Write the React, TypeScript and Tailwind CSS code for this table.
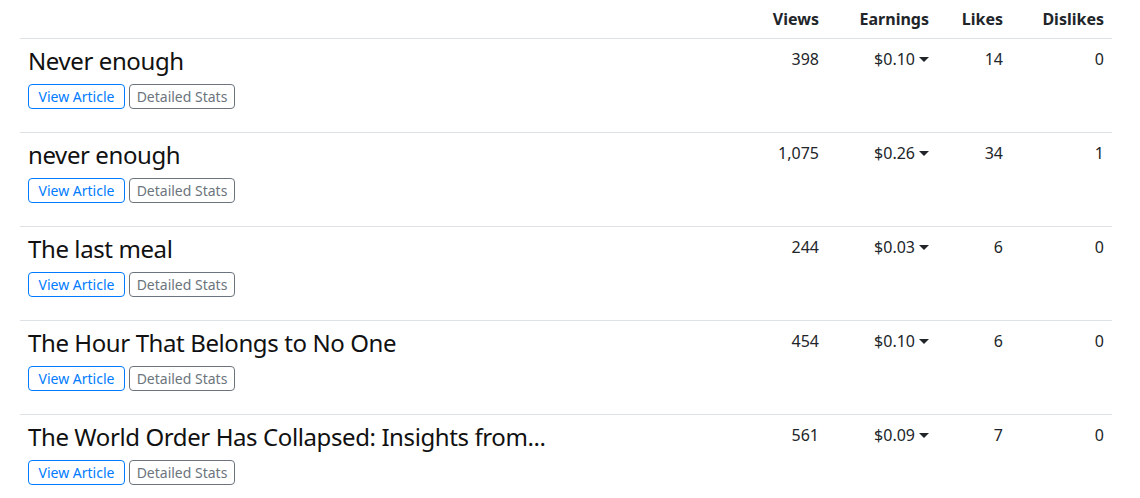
const articles = [
  { title: "Never enough", views: "398", earnings: "$0.10", likes: "14", dislikes: "0" },
  { title: "never enough", views: "1,075", earnings: "$0.26", likes: "34", dislikes: "1" },
  { title: "The last meal", views: "244", earnings: "$0.03", likes: "6", dislikes: "0" },
  { title: "The Hour That Belongs to No One", views: "454", earnings: "$0.10", likes: "6", dislikes: "0" },
  { title: "The World Order Has Collapsed: Insights from...", views: "561", earnings: "$0.09", likes: "7", dislikes: "0" },
];

const cols = "grid grid-cols-[1fr_80px_110px_74px_101px]";

function Caret() {
  return (
    <svg width="10" height="5" viewBox="0 0 10 5" className="ml-[4px] mt-[1px] inline-block">
      <path d="M0 0h10L5 5z" fill="currentColor" />
    </svg>
  );
}

export default function App() {
  return (
    <div className="w-[1140px] h-[498px] overflow-hidden bg-white text-[#212529] font-['Noto_Sans',sans-serif]">
      <div className="ml-[20px] w-[1092px]">
        {/* header */}
        <div className={`${cols} h-[39px] border-b border-[#dee2e6] items-center text-[16px] font-bold`}>
          <div />
          <div className="text-right px-[8px]">Views</div>
          <div className="text-right px-[8px]">Earnings</div>
          <div className="text-right px-[8px]">Likes</div>
          <div className="text-right px-[8px]">Dislikes</div>
        </div>

        {articles.map((a, i) => (
          <div key={i} className={`${cols} h-[94px] border-b border-[#dee2e6] text-[16px] leading-[24px]`}>
            <div className="px-[8px] pt-[7px]">
              <div className="text-[24px] leading-[29px] mb-[9px] whitespace-nowrap tracking-[-0.4px] text-[#111]">{a.title}</div>
              <div className="flex gap-[4px] text-[14px] leading-[20px]">
                <button className="w-[97px] h-[25px] border border-[#007bff] text-[#007bff] rounded-[4px]">
                  View Article
                </button>
                <button className="w-[106px] h-[25px] border border-[#6c757d] text-[#6c757d] rounded-[4px]">
                  Detailed Stats
                </button>
              </div>
            </div>
            <div className="text-right px-[8px] pt-[8px]">{a.views}</div>
            <div className="px-[8px] pt-[8px] flex justify-end items-center h-[32px]">
              {a.earnings}
              <Caret />
            </div>
            <div className="text-right px-[8px] pt-[8px]">{a.likes}</div>
            <div className="text-right px-[8px] pt-[8px]">{a.dislikes}</div>
          </div>
        ))}
      </div>
    </div>
  );
}
